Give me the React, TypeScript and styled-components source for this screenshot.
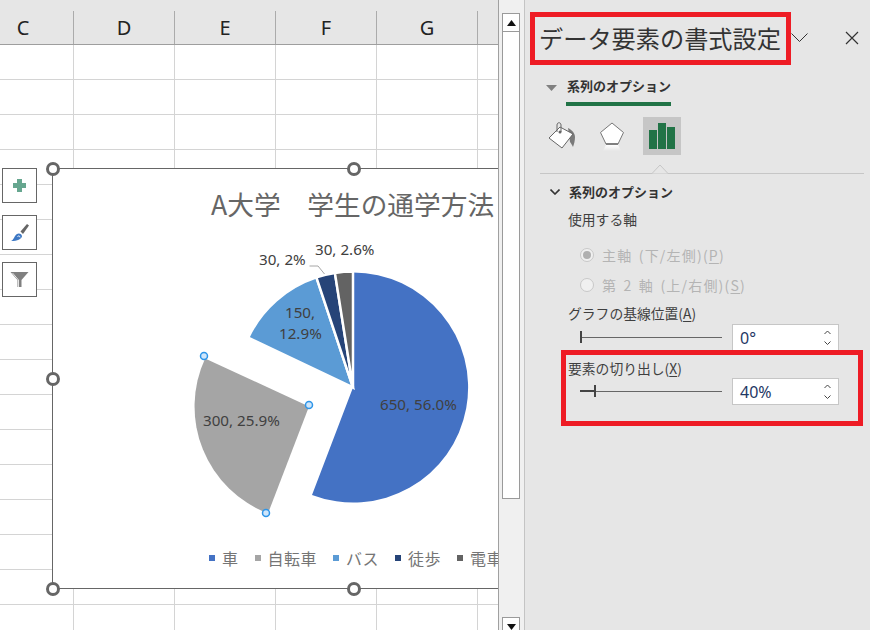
import React from 'react'
import styled, { createGlobalStyle } from 'styled-components'

const Global = createGlobalStyle`
  html, body { margin: 0; padding: 0; background: #e6e6e6; }
  body { font-family: "Noto Sans CJK JP", "Liberation Sans", sans-serif; }
`

const Screen = styled.div`
  position: relative;
  display: flex;
  width: 870px;
  height: 630px;
  overflow: hidden;
`
const SheetArea = styled.div`
  position: relative;
  width: 498px;
  height: 630px;
  flex: none;
  overflow: hidden;
  background: #fff;
`
const ColHeader = styled.div`
  display: flex;
  height: 45px;
  box-sizing: border-box;
  padding-top: 11px;
  margin-left: -27px;
  background: #e6e6e6;
  border-bottom: 1px solid #9e9e9e;
`
const ColName = styled.div`
  width: 101px;
  flex: none;
  box-sizing: border-box;
  border-right: 1px solid #ababab;
  font: 20px/33px "Noto Sans", "Liberation Sans", sans-serif;
  text-align: center;
  color: #222;
`
const Grid = styled.div`
  height: 585px;
  background-color: #fff;
  background-image:
    repeating-linear-gradient(to right, transparent 0 73px, #d4d4d4 73px 74px, transparent 74px 101px),
    repeating-linear-gradient(to bottom, transparent 0 34px, #d4d4d4 34px 35px);
`
const Chart = styled.div`
  position: absolute;
  left: 52px;
  top: 168px;
  width: 460px;
  height: 421px;
  box-sizing: border-box;
  background: #fff;
  border: 1px solid #666;
`
const PieCanvas = styled.svg`
  position: absolute;
  left: -1px;
  top: -1px;
`
const ChartTitle = styled.div`
  position: absolute;
  left: 158px;
  top: 17px;
  font-size: 26.7px;
  line-height: 36px;
  color: #666;
  white-space: nowrap;
`
const Legend = styled.div`
  position: absolute;
  left: 156px;
  top: 377px;
  display: flex;
  gap: 16px;
  font-size: 16px;
  line-height: 24px;
  letter-spacing: 0.5px;
  color: #757575;
  white-space: nowrap;
`
const LegendItem = styled.div`
  display: flex;
  align-items: center;
  gap: 7px;
`
const Swatch = styled.i<{ $color: string }>`
  width: 6px;
  height: 6px;
  background: ${p => p.$color};
`
const Handle = styled.span<{ $x: number; $y: number }>`
  position: absolute;
  left: ${p => p.$x - 7}px;
  top: ${p => p.$y - 7}px;
  width: 14px;
  height: 14px;
  box-sizing: border-box;
  border: 3px solid #666;
  border-radius: 50%;
  background: #fff;
`
const ToolButton = styled.div<{ $y: number }>`
  position: absolute;
  left: 2px;
  top: ${p => p.$y}px;
  width: 35px;
  height: 35px;
  box-sizing: border-box;
  border: 1px solid #666;
  background: #fff;
  display: flex;
  align-items: center;
  justify-content: center;
`
const Scrollbar = styled.div`
  width: 27px;
  flex: none;
  box-sizing: border-box;
  padding: 13px 4px 0 3px;
  background: #f0f0f0;
  border-left: 1px solid #a0a0a0;
  border-right: 1px solid #c4c4c4;
  display: flex;
  flex-direction: column;
`
const ScrollButton = styled.div`
  height: 19px;
  flex: none;
  box-sizing: border-box;
  background: #fff;
  border: 1px solid #9a9a9a;
  display: flex;
  align-items: center;
  justify-content: center;
`
const ScrollThumb = styled.div`
  height: 467px;
  flex: none;
  box-sizing: border-box;
  background: #fff;
  border: 1px solid #9a9a9a;
  border-top: none;
  margin-bottom: 118px;
`
const Pane = styled.div`
  flex: 1;
  background: #e6e6e6;
  color: #3b3b3b;
`
const PaneHead = styled.div`
  display: flex;
  align-items: center;
  height: 63px;
  padding: 13px 0 0 14px;
  box-sizing: border-box;
`
const PaneTitle = styled.div`
  font-size: 24.2px;
  line-height: 50px;
  color: #333;
  white-space: nowrap;
`
const HeadIcons = styled.div`
  display: flex;
  align-items: center;
  margin-left: 10px;
  gap: 37px;
`
const TabRow = styled.div`
  display: flex;
  align-items: flex-start;
  padding: 13px 0 0 21px;
  gap: 9px;
`
const TabArrow = styled.svg`
  margin-top: 9px;
`
const TabLabel = styled.div`
  font-size: 13px;
  font-weight: 700;
  line-height: 20px;
  color: #333;
  padding: 0 1px 6px 1px;
  width: 105px;
  box-sizing: border-box;
  border-bottom: 4px solid #217346;
  white-space: nowrap;
`
const IconRow = styled.div`
  display: flex;
  align-items: center;
  gap: 12px;
  padding-left: 18px;
  margin-top: 11px;
`
const IconCell = styled.div<{ $active?: boolean }>`
  width: 38px;
  height: 38px;
  display: flex;
  align-items: center;
  justify-content: center;
  background: ${p => (p.$active ? '#c6c6c6' : 'transparent')};
`
const Divider = styled.div`
  position: relative;
  height: 1px;
  margin: 18px 6px 0 15px;
  background: #c6c6c6;
`
const Notch = styled.svg`
  position: absolute;
  left: 111px;
  top: -9px;
`
const SectionHead = styled.div`
  display: flex;
  align-items: center;
  gap: 9px;
  padding: 8px 0 0 25px;
  font-size: 13px;
  font-weight: 700;
  line-height: 20px;
  color: #333;
`
const FieldLabel = styled.div<{ $top: number }>`
  padding-left: 43px;
  margin-top: ${p => p.$top}px;
  font-size: 13.8px;
  line-height: 20px;
  color: #3f3f3f;
  white-space: nowrap;
  u { text-underline-offset: 2px; }
`
const RadioRow = styled.div<{ $top: number }>`
  display: flex;
  align-items: center;
  gap: 8px;
  padding-left: 55px;
  margin-top: ${p => p.$top}px;
  font-size: 14px;
  line-height: 20px;
  letter-spacing: 1.2px;
  word-spacing: 2px;
  color: #b4b4b4;
  white-space: nowrap;
  u { text-underline-offset: 2px; }
`
const Radio = styled.span<{ $on?: boolean }>`
  position: relative;
  width: 14px;
  height: 14px;
  flex: none;
  box-sizing: border-box;
  border: 1px solid #c8c8c8;
  border-radius: 50%;
  background: #f0f0f0;
  &::after {
    content: '';
    display: ${p => (p.$on ? 'block' : 'none')};
    position: absolute;
    inset: 2px;
    border-radius: 50%;
    background: #b0b0b0;
  }
`
const SliderRow = styled.div<{ $top: number }>`
  display: flex;
  align-items: center;
  padding-left: 55px;
  margin-top: ${p => p.$top}px;
`
const Track = styled.div`
  position: relative;
  width: 142px;
  height: 1px;
  background: #666;
`
const Knob = styled.span<{ $x: number }>`
  position: absolute;
  left: ${p => p.$x}px;
  top: -6px;
  width: 2px;
  height: 12px;
  background: #444;
`
const Progress = styled.span<{ $w: number }>`
  position: absolute;
  left: 0;
  top: -1px;
  width: ${p => p.$w}px;
  height: 2px;
  background: #444;
`
const Spin = styled.div`
  display: flex;
  align-items: center;
  justify-content: space-between;
  width: 107px;
  height: 27px;
  margin-left: 10px;
  padding: 0 7px;
  box-sizing: border-box;
  background: #fff;
  border: 1px solid #c6c6c6;
  font: 16px "Noto Sans", "Liberation Sans", sans-serif;
  color: #1f3864;
`
const SpinArrows = styled.div`
  display: flex;
  flex-direction: column;
  gap: 7px;
`
const ChevronSvg = styled.svg<{ $flip?: boolean }>`
  display: block;
  flex: none;
  transform: ${p => (p.$flip ? 'scaleY(-1)' : 'none')};
`
const Highlight = styled.div<{ $x: number; $y: number; $w: number; $h: number }>`
  position: absolute;
  left: ${p => p.$x}px;
  top: ${p => p.$y}px;
  width: ${p => p.$w}px;
  height: ${p => p.$h}px;
  box-sizing: border-box;
  border: 5px solid #ee1c25;
  pointer-events: none;
`

// one pie slice, angles in degrees clockwise from the top
const slice = (cx: number, cy: number, r: number, from: number, to: number) => {
  const pt = (a: number) => {
    const t = ((a - 90) * Math.PI) / 180
    return `${(cx + r * Math.cos(t)).toFixed(1)} ${(cy + r * Math.sin(t)).toFixed(1)}`
  }
  return `M${cx} ${cy}L${pt(from)}A${r} ${r} 0 ${to - from > 180 ? 1 : 0} 1 ${pt(to)}Z`
}

const legend = [
  ['#4472c4', '車'],
  ['#a5a5a5', '自転車'],
  ['#5b9bd5', 'バス'],
  ['#264478', '徒歩'],
  ['#636363', '電車'],
]

const Pie = () => (
  <PieCanvas width="460" height="421">
    <path d={slice(301, 219.5, 115, 0, 200.9)} fill="#4472c4" />
    <path d={slice(257, 238.5, 114.5, 201, 294.8)} fill="#a5a5a5" />
    <g stroke="#fff" strokeWidth="2.5">
      <path d={slice(301, 219.5, 116, 295.4, 341.6)} fill="#5b9bd5" />
      <path d={slice(301, 219.5, 116, 341.6, 351)} fill="#264478" />
      <path d={slice(301, 219.5, 116, 351, 360)} fill="#636363" />
    </g>
    <path d="M257.500 98H266L272.500 106" fill="none" stroke="#a6a6a6" />
    <g fontFamily='"Noto Sans", "Liberation Sans", sans-serif' fontSize="15.2" fill="#404040">
      <text x="207" y="97">30, 2%</text>
      <text x="263" y="87">30, 2.6%</text>
      <text x="233" y="150">150,</text>
      <text x="227" y="171">12.9%</text>
      <text x="328" y="242">650, 56.0%</text>
      <text x="151" y="258">300, 25.9%</text>
    </g>
    <g fill="#cfe6fb" stroke="#2e95e8" strokeWidth="1.5">
      <circle cx="152" cy="188" r="3.5" />
      <circle cx="257" cy="237" r="3.5" />
      <circle cx="214" cy="345" r="3.5" />
    </g>
  </PieCanvas>
)

const Chevron = ({ size = 16, flip = false, color = '#333', w = 1 }: { size?: number; flip?: boolean; color?: string; w?: number }) => (
  <ChevronSvg width={size} height={size / 2 + 1} $flip={flip}>
    <path d={`M0.5 0.5L${size / 2} ${size / 2}L${size - 0.5} 0.5`} fill="none" stroke={color} strokeWidth={w} />
  </ChevronSvg>
)

const SpinBox = ({ value }: { value: string }) => (
  <Spin>
    {value}
    <SpinArrows>
      <Chevron size={7} flip color="#444" />
      <Chevron size={7} color="#444" />
    </SpinArrows>
  </Spin>
)

export default function App() {
  return (
    <Screen>
      <Global />
      <SheetArea>
        <ColHeader>
          {['C', 'D', 'E', 'F', 'G', ''].map(c => (
            <ColName key={c}>{c}</ColName>
          ))}
        </ColHeader>
        <Grid />
        <Chart>
          <Pie />
          <ChartTitle>A大学　学生の通学方法</ChartTitle>
          <Legend>
            {legend.map(([color, name]) => (
              <LegendItem key={name}>
                <Swatch $color={color} />
                {name}
              </LegendItem>
            ))}
          </Legend>
        </Chart>
        <Handle $x={53} $y={169} />
        <Handle $x={354} $y={169} />
        <Handle $x={53} $y={379} />
        <Handle $x={53} $y={589} />
        <Handle $x={354} $y={589} />
        <ToolButton $y={168}>
          <svg width="15" height="15"><path d="M5 1h5v4h4v5h-4v4H5v-4H1V5h4z" fill="#66a68f" /></svg>
        </ToolButton>
        <ToolButton $y={215}>
          <svg width="22" height="22" viewBox="0 0 22 22">
            <path d="M11.500 9.500L18 2l2 1.500-6 8.500z" fill="#666" />
            <path d="M2 19c3-1 3-5 6-7 2-1.500 5 0 5 2.500C12 17 9 19 2 19z" fill="#3d78c4" />
            <path d="M8.500 14.500c1-1 2.500-.5 2.500.8" fill="none" stroke="#fff" />
          </svg>
        </ToolButton>
        <ToolButton $y={262}>
          <svg width="22" height="22" viewBox="0 0 22 22">
            <path d="M1.500 3h18l-7 8v7h-4v-7z" fill="#808080" />
            <path d="M3.500 4l6 7v7" fill="none" stroke="#e4e4e4" />
          </svg>
        </ToolButton>
      </SheetArea>
      <Scrollbar>
        <ScrollButton>
          <svg width="9" height="6"><path d="M4.500 0L9 6H0Z" fill="#111" /></svg>
        </ScrollButton>
        <ScrollThumb />
        <ScrollButton>
          <svg width="9" height="6"><path d="M4.500 6L9 0H0Z" fill="#111" /></svg>
        </ScrollButton>
      </Scrollbar>
      <Pane>
        <PaneHead>
          <PaneTitle>データ要素の書式設定</PaneTitle>
          <HeadIcons>
            <Chevron size={17} />
            <svg width="14" height="14"><path d="M1 1l12 12M13 1L1 13" stroke="#333" strokeWidth="1.200" /></svg>
          </HeadIcons>
        </PaneHead>
        <TabRow>
          <TabArrow width="11" height="6"><path d="M0 0h11L5.500 6z" fill="#808080" /></TabArrow>
          <TabLabel>系列のオプション</TabLabel>
        </TabRow>
        <IconRow>
          <IconCell>
            <svg width="38" height="38" viewBox="0 0 38 38">
              <path d="M25 11c4 2 7 5 7 9 0 4-1 7-2 10-1-2-2-4-3-5z" fill="#7a7a7a" />
              <path d="M6 21L17 10l13 7-11 14z" fill="#fff" stroke="#666" />
              <path d="M14 15V8c0-3 4-3 4 0v7" fill="none" stroke="#666" />
              <circle cx="17" cy="15" r="1.500" fill="#666" />
            </svg>
          </IconCell>
          <IconCell>
            <svg width="38" height="38" viewBox="0 0 38 38">
              <defs>
                <linearGradient id="fade" x1="0" y1="0" x2="0" y2="1">
                  <stop offset="0" stopColor="#fff" />
                  <stop offset="1" stopColor="#e6e6e6" />
                </linearGradient>
              </defs>
              <path d="M19 6l11.500 9.500L25 27H13L7.500 15.500z" fill="#fff" stroke="#777" />
              <path d="M13 27h12" stroke="#808080" strokeWidth="2" />
              <path d="M13 28h12l3 6H10z" fill="url(#fade)" />
            </svg>
          </IconCell>
          <IconCell $active>
            <svg width="26" height="26" viewBox="0 0 26 26">
              <path d="M0 7h8v19H0zM9 0h8v26H9zM18 4h8v22h-8z" fill="#217346" />
            </svg>
          </IconCell>
        </IconRow>
        <Divider>
          <Notch width="18" height="10"><path d="M0 9.500h1L9 1l8 8.500h1" fill="#e6e6e6" stroke="#c6c6c6" /></Notch>
        </Divider>
        <SectionHead>
          <Chevron size={10} w={1.6} />
          系列のオプション
        </SectionHead>
        <FieldLabel $top={7}>使用する軸</FieldLabel>
        <RadioRow $top={16}><Radio $on /><span>主軸 (下/左側)(<u>P</u>)</span></RadioRow>
        <RadioRow $top={10}><Radio /><span>第 2 軸 (上/右側)(<u>S</u>)</span></RadioRow>
        <FieldLabel $top={8}>グラフの基線位置(<u>A</u>)</FieldLabel>
        <SliderRow $top={1}>
          <Track><Knob $x={0} /></Track>
          <SpinBox value="0°" />
        </SliderRow>
        <FieldLabel $top={7}>要素の切り出し(<u>X</u>)</FieldLabel>
        <SliderRow $top={0}>
          <Track><Progress $w={15} /><Knob $x={14} /></Track>
          <SpinBox value="40%" />
        </SliderRow>
      </Pane>
      <Highlight $x={530} $y={12} $w={261} $h={53} />
      <Highlight $x={561} $y={350} $w={302} $h={76} />
    </Screen>
  )
}
